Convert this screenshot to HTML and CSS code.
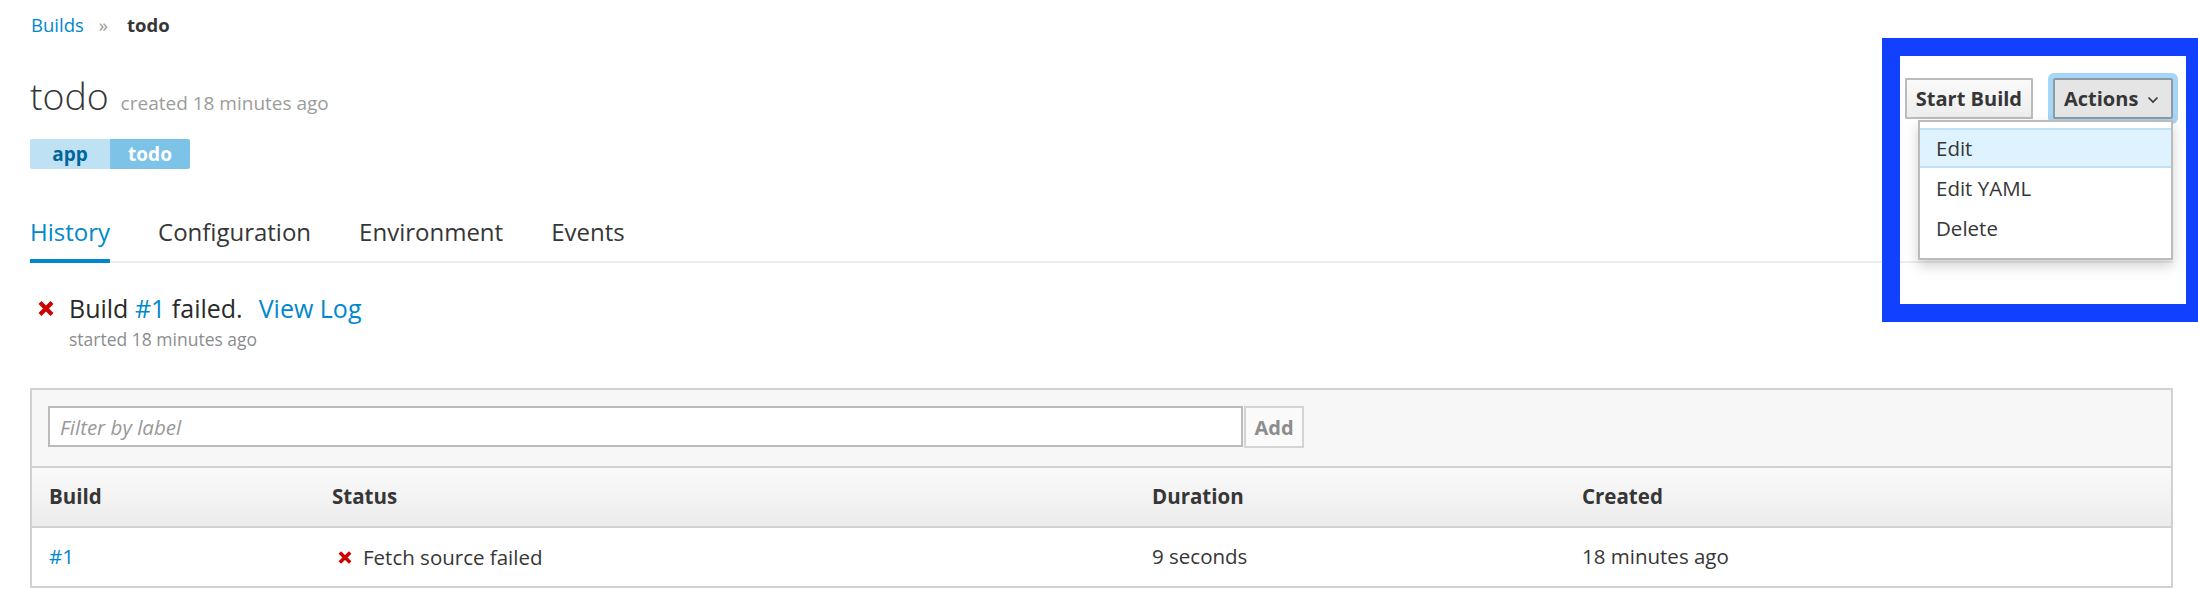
FILE: index.html
```html
<!DOCTYPE html>
<html lang="en">
<head>
<meta charset="utf-8">
<title>todo - Builds</title>
<link rel="stylesheet" href="styles.css">
</head>
<body>
<div class="page">
  <nav class="breadcrumb">
    <a class="crumb-link" href="#">Builds</a>
    <span class="crumb-sep">»</span>
    <span class="crumb-current">todo</span>
  </nav>

  <div class="header">
    <div class="header-left">
      <h1 class="title">todo <small class="title-meta">created 18 minutes ago</small></h1>
      <div class="labels">
        <span class="label-key">app</span><span class="label-value">todo</span>
      </div>
    </div>
    <div class="actions">
      <button class="btn">Start Build</button>
      <div class="dropdown">
        <button class="btn btn-active">Actions
          <svg class="caret" width="12" height="8" viewBox="0 0 12 8"><polyline points="1.5,1.5 6,6 10.5,1.5" fill="none" stroke="#363636" stroke-width="1.6"/></svg>
        </button>
        <ul class="menu">
          <li class="menu-item menu-item-hover">Edit</li>
          <li class="menu-item">Edit YAML</li>
          <li class="menu-item">Delete</li>
        </ul>
      </div>
    </div>
  </div>

  <ul class="tabs">
    <li class="tab tab-active">History</li>
    <li class="tab">Configuration</li>
    <li class="tab">Environment</li>
    <li class="tab">Events</li>
  </ul>

  <div class="status">
    <div class="status-line">
      <svg class="x-icon" width="16" height="15" viewBox="0 0 16 15"><path d="M2 1.5 L14 13.5 M14 1.5 L2 13.5" stroke="#cc0000" stroke-width="4.2" fill="none"/></svg>
      <span>Build <a href="#" class="link">#1</a> failed.</span>
      <a href="#" class="link view-log">View Log</a>
    </div>
    <div class="status-sub">started 18 minutes ago</div>
  </div>

  <div class="table-box">
    <div class="filter-bar">
      <input class="filter-input" type="text" placeholder="Filter by label">
      <button class="btn-add">Add</button>
    </div>
    <div class="grid grid-head">
      <div class="cell">Build</div>
      <div class="cell">Status</div>
      <div class="cell">Duration</div>
      <div class="cell">Created</div>
    </div>
    <div class="grid grid-row">
      <div class="cell"><a href="#" class="link">#1</a></div>
      <div class="cell cell-status">
        <svg class="x-icon-sm" width="14" height="13" viewBox="0 0 14 13"><path d="M1.8 1.5 L12.2 11.5 M12.2 1.5 L1.8 11.5" stroke="#cc0000" stroke-width="3.6" fill="none"/></svg>
        Fetch source failed
      </div>
      <div class="cell">9 seconds</div>
      <div class="cell">18 minutes ago</div>
    </div>
  </div>
</div>
<div class="highlight-frame"></div>
</body>
</html>
```

FILE: styles.css
```css
html, body {
  margin: 0;
  padding: 0;
  background: #fff;
  overflow: hidden;
}

body {
  font-family: "Open Sans", "Noto Sans", sans-serif;
  color: #363636;
  font-size: 20.5px;
}

.page {
  padding: 12px 25px 0 30px;
}

a { text-decoration: none; }

.link { color: #0088ce; }

/* breadcrumb */
.breadcrumb {
  font-size: 18.5px;
  line-height: 26px;
  height: 26px;
  display: flex;
  align-items: baseline;
}
.crumb-link { color: #0088ce; margin-left: 1px; }
.crumb-sep { color: #9c9c9c; margin: 0 19px 0 15px; }
.crumb-current { font-weight: 700; color: #363636; }

/* header */
.header {
  display: flex;
  justify-content: space-between;
  align-items: flex-start;
  margin-top: 36px;
}

.title {
  margin: 0;
  font-size: 37.5px;
  line-height: 44px;
  font-weight: 300;
  color: #363636;
}
.title-meta {
  font-size: 19px;
  font-weight: 400;
  color: #9c9c9c;
  margin-left: 2px;
}

.labels {
  display: flex;
  margin-top: 14px;
}
.label-key, .label-value {
  min-width: 80px;
  height: 30px;
  line-height: 30px;
  text-align: center;
  font-size: 19px;
  font-weight: 700;
}
.label-key {
  background: #bee1f4;
  color: #00659c;
  border-radius: 2px 0 0 2px;
}
.label-value {
  background: #7dc3e8;
  color: #fff;
  border-radius: 0 2px 2px 0;
}

/* actions */
.actions {
  display: flex;
  gap: 20px;
  margin-top: 4px;
}
.btn {
  font-family: inherit;
  font-size: 20px;
  font-weight: 700;
  color: #363636;
  height: 41px;
  padding: 0 9px;
  border: 2px solid #bbb;
  border-radius: 1px;
  background: linear-gradient(#fafafa, #ededed);
  display: flex;
  align-items: center;
}
.btn-active {
  background: #e5e5e5;
  border-color: #8e9aa4;
  box-shadow: 0 0 0 5px #a6d6f5;
  border-radius: 2px;
  padding: 0 10px 0 9px;
  width: 120px;
}
.caret { margin-left: 9px; margin-top: 2px; }

.dropdown { position: relative; }

.menu {
  position: absolute;
  right: 0;
  top: 42px;
  width: 255px;
  box-sizing: border-box;
  margin: 0;
  padding: 6px 0 10px;
  list-style: none;
  background: #fff;
  border: 2px solid #bbb;
  box-shadow: 0 6px 12px rgba(0, 0, 0, 0.18);
  z-index: 5;
}
.menu-item {
  font-size: 20.5px;
  line-height: 36px;
  padding: 0 16px;
  border-top: 2px solid transparent;
  border-bottom: 2px solid transparent;
  color: #363636;
}
.menu-item-hover {
  background: #def3ff;
  border-color: #bee1f4;
}

/* tabs */
.tabs {
  display: flex;
  gap: 48px;
  margin: 47px 0 0;
  padding: 0;
  list-style: none;
  border-bottom: 2px solid #ededed;
}
.tab {
  font-size: 24px;
  line-height: 32px;
  padding-bottom: 11px;
  border-bottom: 4px solid transparent;
  margin-bottom: -2px;
  color: #363636;
}
.tab-active {
  color: #0088ce;
  border-bottom-color: #0088ce;
}

/* status */
.status {
  margin-top: 28px;
  padding-left: 8px;
}
.status-line {
  display: flex;
  align-items: center;
  font-size: 25px;
  line-height: 34px;
  color: #292929;
}
.x-icon { margin-right: 15px; margin-top: 1px; }
.view-log { margin-left: 16px; }
.status-sub {
  font-size: 17.5px;
  line-height: 24px;
  margin-top: 2px;
  padding-left: 31px;
  color: #8b8d8f;
}

/* table */
.table-box {
  margin-top: 37px;
  border: 2px solid #d1d1d1;
  border-bottom: none;
}
.filter-bar {
  display: flex;
  background: #f7f7f7;
  padding: 16px 16px 18px;
  border-bottom: 2px solid #d1d1d1;
}
.filter-input {
  width: 1195px;
  height: 41px;
  box-sizing: border-box;
  border: 2px solid #bbb;
  padding: 0 10px;
  font-family: inherit;
  font-size: 20.5px;
  font-style: italic;
  color: #363636;
  background: #fff;
}
.filter-input::placeholder { color: #999; font-style: italic; }
.btn-add {
  height: 42px;
  width: 60px;
  margin-left: 1px;
  border: 2px solid #d4d4d4;
  background: #fafafa;
  font-family: inherit;
  font-size: 20px;
  font-weight: 700;
  color: #8b8d8f;
  padding: 0;
}

.grid {
  display: grid;
  grid-template-columns: 283px 820px 430px 1fr;
  border-bottom: 2px solid #d1d1d1;
}
.grid-head {
  background: linear-gradient(#fafafa, #ececec);
  font-weight: 700;
  color: #363636;
}
.cell {
  height: 58px;
  line-height: 56px;
  padding-left: 17px;
  font-size: 20.5px;
  white-space: nowrap;
}
.cell-status {
  display: flex;
  align-items: center;
  padding-left: 23px;
}
.x-icon-sm { margin-right: 11px; }

/* annotation frame */
.highlight-frame {
  position: absolute;
  left: 1882px;
  top: 38px;
  width: 316px;
  height: 284px;
  box-sizing: border-box;
  border-style: solid;
  border-color: #1240ff;
  border-width: 18px 12px 18px 18px;
  z-index: 10;
}
```
